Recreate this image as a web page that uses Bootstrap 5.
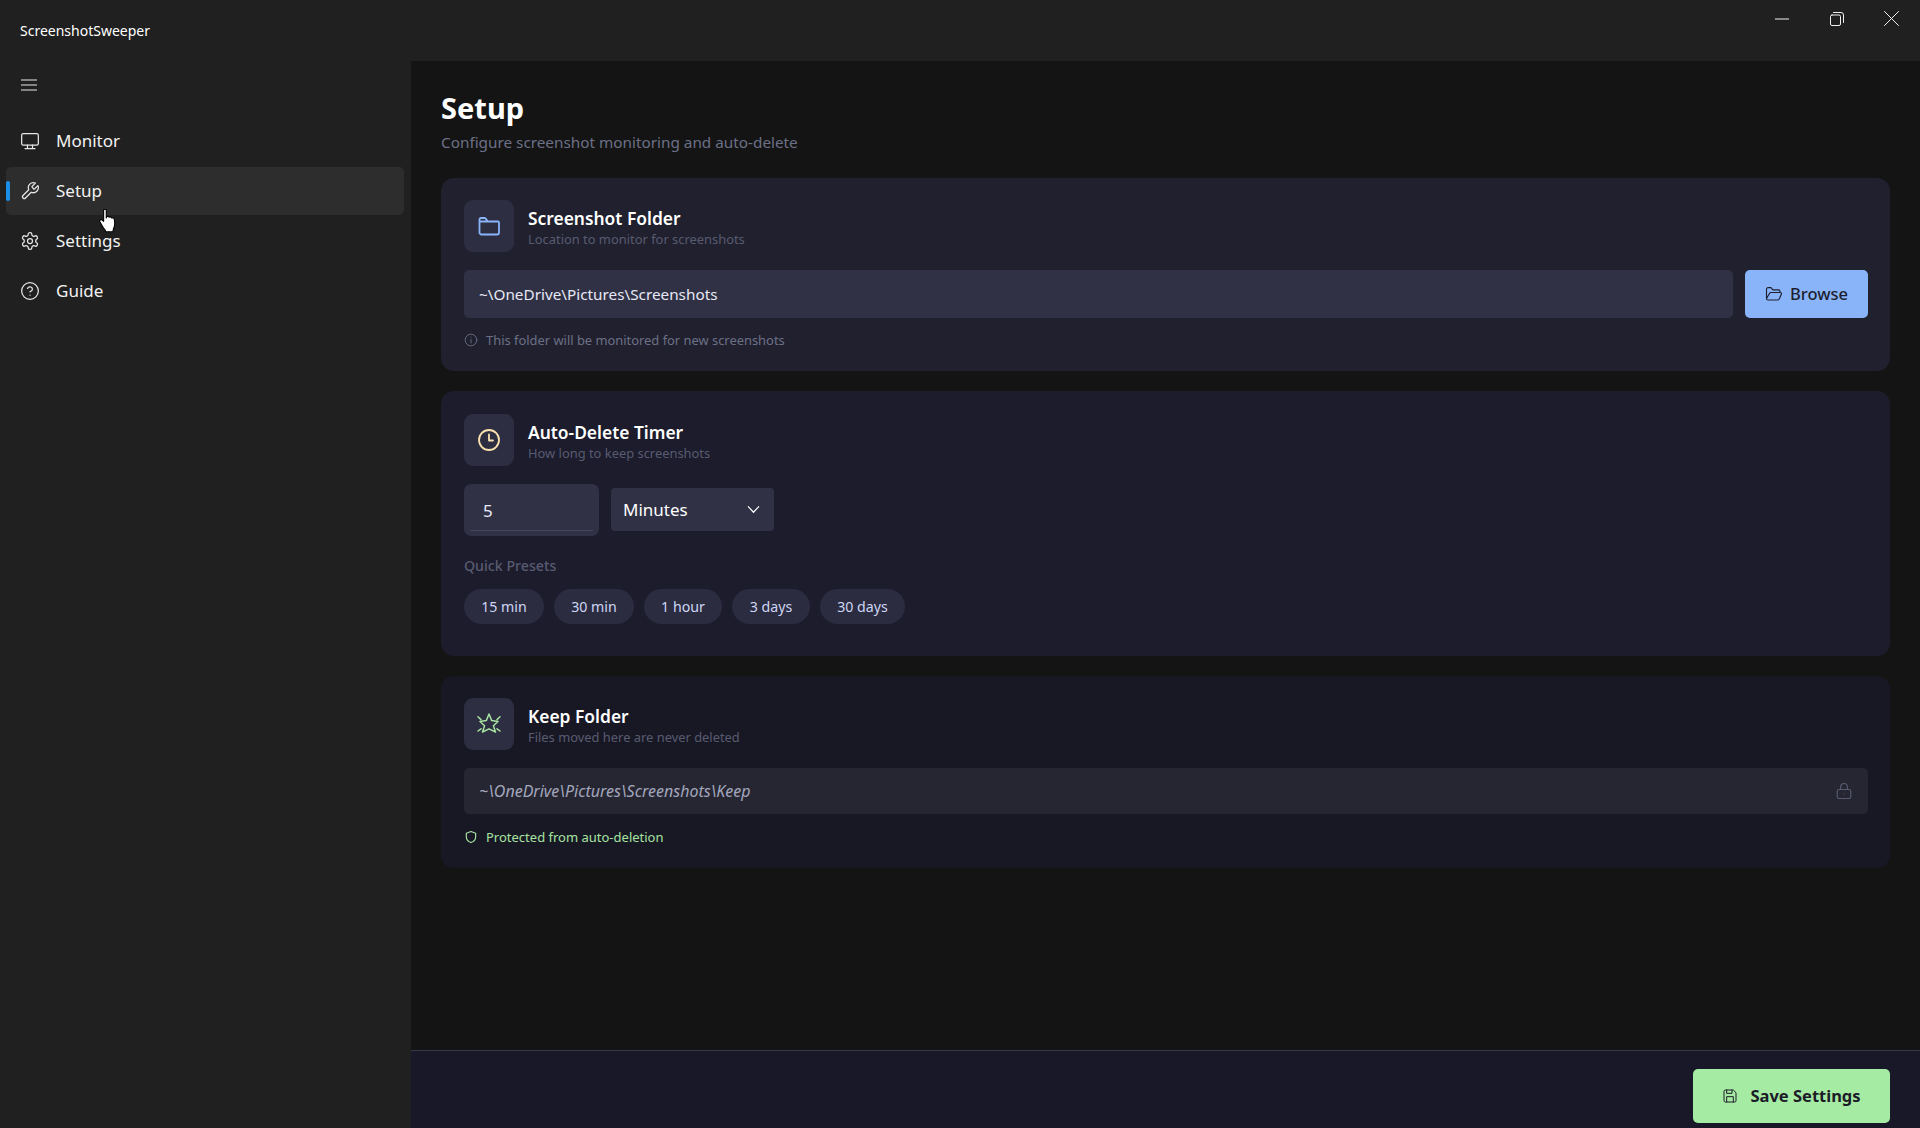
<!DOCTYPE html>
<html lang="en">
<head>
<meta charset="UTF-8">
<meta name="viewport" content="width=device-width, initial-scale=1.0">
<title>ScreenshotSweeper</title>
<link href="https://cdn.jsdelivr.net/npm/bootstrap@5.3.0/dist/css/bootstrap.min.css" rel="stylesheet">
<style>
body { font-family: "Noto Sans", "Open Sans", sans-serif; background: #202020; color: #fff; height: 1128px; overflow: hidden; }
svg { fill: none; stroke: currentColor; stroke-width: 1.5; stroke-linecap: round; stroke-linejoin: round; flex-shrink: 0; }

.titlebar { height: 61px; }
.app-name { font-size: 14px; margin-left: 20px; margin-top: 22px; line-height: 18px; }
.win-btn { width: 55px; height: 37px; color: #f0f0f0; position: relative; left: -1px; }
.win-btn svg { stroke-width: 1; }

.sidebar { width: 411px; padding: 0 7px 0 6px; }
.menu-btn { margin: 10px 0 26px 15px; height: 20px; color: #e8e8e8; }
.nav-row { height: 48px; margin-bottom: 2px; padding-left: 14px; gap: 16px; font-size: 17px; color: #f2f2f2; border-radius: 5px; position: relative; }
.nav-row svg { color: #e6e6e6; }
.nav-row.active { background: #2d2d2d; }
.nav-row.active::before { content: ""; position: absolute; left: 0; top: 14px; width: 4px; height: 20px; border-radius: 2px; background: #1b8fe8; }
.cursor { position: absolute; left: 99px; top: 148px; stroke: #000; stroke-width: 1; fill: #fff; }

.main-pane { background: #141414; }
.main-body { padding: 28px 30px 0; }
.page-title { font-size: 29px; font-weight: 700; line-height: 38px; margin: 0; }
.page-sub { font-size: 15.3px; color: #6c7086; line-height: 20px; margin: 5px 0 26px; }

.panel { border: 0; border-radius: 13px; padding: 22px 22px 0 23px; margin-bottom: 20px; }
.panel-a { background: #20202e; height: 193px; }
.panel-b { background: #1c1c2c; height: 265px; padding-top: 23px; }
.panel-c { background: #181825; height: 192px; }
.icon-box { width: 50px; height: 52px; border-radius: 9px; background: #2e2e42; }
.icon-box svg { stroke-width: 1.8; }
.panel-title { font-size: 17.4px; font-weight: 600; line-height: 22px; margin-top: 7px; }
.panel-sub { font-size: 12.9px; color: #585b70; line-height: 16px; margin-top: 2px; }
.head-row { gap: 14px; margin-bottom: 18px; }

.field { background: #313145; border: 0; border-radius: 5px; color: #e6e9f5; font-size: 15.3px; height: 48px; padding: 0 15px; }
.field:focus { background: #313145; color: #e6e9f5; box-shadow: none; }
.browse { background: #89b4fa; color: #1e1e2e; border: 0; border-radius: 5px; width: 123px; height: 48px; font-size: 16.5px; font-weight: 500; gap: 7px; }
.hint { font-size: 12.9px; color: #6c7086; gap: 8px; margin-top: 13px; line-height: 18px; }

.num-wrap { width: 135px; height: 52px; position: relative; margin-right: 12px; }
.num-wrap .field { height: 52px; padding: 0 19px; font-size: 17px; border-radius: 7px; }
.num-wrap::after { content: ""; position: absolute; left: 6px; right: 6px; bottom: 5px; height: 1px; background: #45455c; }
.unit { width: 163px; height: 43px; background-color: #313145; border: 0; border-radius: 4px; color: #fff; font-size: 17px; padding: 0 12px; background-position: right 13px center; background-size: 15px 11px;
  --bs-form-select-bg-img: url("data:image/svg+xml,%3csvg xmlns='http://www.w3.org/2000/svg' viewBox='0 0 16 12'%3e%3cpath fill='none' stroke='%23ffffff' stroke-width='1.3' d='M2 2.5l6 6.5 6-6.5'/%3e%3c/svg%3e"); }
.preset-label { font-size: 14.2px; font-weight: 500; color: #585b70; line-height: 18px; margin: 21px 0 14px; }
.preset { background: #2c2c40; color: #cdd6f4; border: 0; border-radius: 18px; height: 35px; padding: 0; font-size: 14.2px; }
.keep-field { background: #262632; color: #a3a7bd; font-style: italic; font-size: 16px; height: 46px; border-radius: 5px; padding: 0 15px; }
.lock { color: #585b70; }
.hint.safe { color: #a6e3a1; font-size: 13px; margin-top: 14px; }

.footer-bar { height: 78px; background: #181829; border-top: 1px solid #37374a; padding: 18px 30px 0 0; }
.save { background: #a6eba3; color: #1c1c28; border: 0; border-radius: 5px; width: 197px; height: 54px; font-size: 16.5px; font-weight: 700; gap: 12px; }
</style>
</head>
<body>
<div class="d-flex justify-content-between titlebar">
  <div class="app-name">ScreenshotSweeper</div>
  <div class="d-flex">
    <div class="win-btn d-flex align-items-center justify-content-center"><svg width="14" height="14" viewBox="0 0 14 14"><path d="M0 7h14"/></svg></div>
    <div class="win-btn d-flex align-items-center justify-content-center"><svg width="14" height="14" viewBox="0 0 14 14"><rect x=".5" y="3" width="10" height="10.5" rx="1.5"/><path d="M3.5 .5h7.5a2.5 2.5 0 0 1 2.5 2.5v7.5"/></svg></div>
    <div class="win-btn d-flex align-items-center justify-content-center"><svg width="15" height="15" viewBox="0 0 15 15"><path d="M.5 .5l14 14M14.5 .5l-14 14"/></svg></div>
  </div>
</div>

<div class="d-flex" style="height: 1067px">
  <div class="sidebar position-relative">
    <div class="menu-btn"><svg width="16" height="12" viewBox="0 0 16 12" style="stroke-width:1"><path d="M0 1h16M0 6h16M0 11h16"/></svg></div>
    <div class="nav-row d-flex align-items-center">
      <svg width="20" height="20" viewBox="0 0 24 24"><rect x="2" y="3" width="20" height="14" rx="2"/><path d="M9 17v3.5M15 17v3.5M6 21h12"/></svg>Monitor
    </div>
    <div class="nav-row d-flex align-items-center active">
      <svg width="20" height="20" viewBox="0 0 24 24"><path d="M14.7 6.3a1 1 0 0 0 0 1.4l1.6 1.6a1 1 0 0 0 1.4 0l3.77-3.77a6 6 0 0 1-7.94 7.94l-6.91 6.91a2.12 2.12 0 0 1-3-3l6.91-6.91a6 6 0 0 1 7.94-7.94l-3.76 3.76z"/></svg>Setup
    </div>
    <div class="nav-row d-flex align-items-center">
      <svg width="20" height="20" viewBox="0 0 24 24"><path d="M12.22 2h-.44a2 2 0 0 0-2 2v.18a2 2 0 0 1-1 1.73l-.43.25a2 2 0 0 1-2 0l-.15-.08a2 2 0 0 0-2.73.73l-.22.38a2 2 0 0 0 .73 2.73l.15.1a2 2 0 0 1 1 1.72v.51a2 2 0 0 1-1 1.74l-.15.09a2 2 0 0 0-.73 2.73l.22.38a2 2 0 0 0 2.73.73l.15-.08a2 2 0 0 1 2 0l.43.25a2 2 0 0 1 1 1.73V20a2 2 0 0 0 2 2h.44a2 2 0 0 0 2-2v-.18a2 2 0 0 1 1-1.73l.43-.25a2 2 0 0 1 2 0l.15.08a2 2 0 0 0 2.73-.73l.22-.39a2 2 0 0 0-.73-2.73l-.15-.08a2 2 0 0 1-1-1.74v-.5a2 2 0 0 1 1-1.74l.15-.09a2 2 0 0 0 .73-2.73l-.22-.38a2 2 0 0 0-2.73-.73l-.15.08a2 2 0 0 1-2 0l-.43-.25a2 2 0 0 1-1-1.73V4a2 2 0 0 0-2-2z"/><circle cx="12" cy="12" r="3"/></svg>Settings
    </div>
    <div class="nav-row d-flex align-items-center">
      <svg width="20" height="20" viewBox="0 0 24 24"><circle cx="12" cy="12" r="10"/><path d="M9.09 9a3 3 0 0 1 5.83 1c0 2-3 3-3 3M12 17h.01"/></svg>Guide
    </div>
    <svg class="cursor" width="18" height="24" viewBox="1 1 15 22"><path d="M4.5 2.2c0-1.5 2.4-1.5 2.4 0v7l.5-1.2c.9-.5 1.9-.2 2.2.6.9-.5 1.9-.2 2.2.7.9-.4 2-.1 2.4.9.7 2.6.6 5.8-.5 8.5-.4 1-.6 2-.6 3.2H6.5c-.3-1.4-1-2.3-2-3.3L1.2 13c-1-1.3.3-2.8 1.7-2l1.6 1.3z"/></svg>
  </div>

  <div class="main-pane flex-grow-1 d-flex flex-column">
    <div class="main-body flex-grow-1">
      <h1 class="page-title">Setup</h1>
      <p class="page-sub">Configure screenshot monitoring and auto-delete</p>

      <div class="card panel panel-a text-white">
        <div class="d-flex head-row">
          <div class="icon-box d-flex align-items-center justify-content-center" style="color:#89b4fa">
            <svg width="24" height="24" viewBox="0 0 24 24"><path d="M2.5 8V5.5A1.5 1.5 0 0 1 4 4h3.5a1.5 1.5 0 0 1 1.2.6L11 7.5h10a1 1 0 0 1 1 1v10a2 2 0 0 1-2 2H4.5a2 2 0 0 1-2-2zM2.5 7.5H11"/></svg>
          </div>
          <div><div class="panel-title">Screenshot Folder</div><div class="panel-sub">Location to monitor for screenshots</div></div>
        </div>
        <div class="d-flex gap-2">
          <input class="form-control field flex-grow-1 me-1" value="~\OneDrive\Pictures\Screenshots">
          <button class="btn browse d-flex align-items-center justify-content-center flex-shrink-0">
            <svg width="18" height="18" viewBox="0 0 24 24"><path d="M2 18V5.5A2 2 0 0 1 4 3.5h4l2.5 3H18a2 2 0 0 1 2 2v1.5M2 18a2 2 0 0 0 2 2h13a2 2 0 0 0 2-1.4l3-7a1.5 1.5 0 0 0-1.5-1.6H8a2 2 0 0 0-2 1.4z"/></svg>Browse
          </button>
        </div>
        <div class="hint d-flex align-items-center">
          <svg width="14" height="14" viewBox="0 0 24 24"><circle cx="12" cy="12" r="10"/><path d="M12 11v6M12 7h.01"/></svg>This folder will be monitored for new screenshots
        </div>
      </div>

      <div class="card panel panel-b text-white">
        <div class="d-flex head-row">
          <div class="icon-box d-flex align-items-center justify-content-center" style="color:#f9e2af">
            <svg width="24" height="24" viewBox="0 0 24 24"><circle cx="12" cy="12" r="10"/><path d="M12 6.5V12.5h4"/></svg>
          </div>
          <div><div class="panel-title">Auto-Delete Timer</div><div class="panel-sub">How long to keep screenshots</div></div>
        </div>
        <div class="d-flex align-items-start">
          <div class="num-wrap"><input class="form-control field" value="5"></div>
          <select class="form-select unit mt-1"><option>Minutes</option></select>
        </div>
        <div class="preset-label">Quick Presets</div>
        <div class="d-flex" style="gap:10px">
          <button class="btn preset" style="width:80px">15 min</button>
          <button class="btn preset" style="width:80px">30 min</button>
          <button class="btn preset" style="width:78px">1 hour</button>
          <button class="btn preset" style="width:78px">3 days</button>
          <button class="btn preset" style="width:85px">30 days</button>
        </div>
      </div>

      <div class="card panel panel-c text-white">
        <div class="d-flex head-row">
          <div class="icon-box d-flex align-items-center justify-content-center" style="color:#a6e3a1">
            <svg width="24" height="24" viewBox="0 0 24 24" style="stroke-width:1.5"><path d="M12 2l2.6 6.4 6.4 1.1-4.6 4.2 2.1 6.3-6.5-3.2-6.5 3.2 2.1-6.3L3 9.5l6.4-1.1zM1 4.8l3 2.8M23 4.8l-3 2.8M1 19l3-2.2M23 19l-3-2.2"/></svg>
          </div>
          <div><div class="panel-title">Keep Folder</div><div class="panel-sub">Files moved here are never deleted</div></div>
        </div>
        <div class="keep-field d-flex align-items-center justify-content-between">
          <span>~\OneDrive\Pictures\Screenshots\Keep</span>
          <svg class="lock" width="18" height="18" viewBox="0 0 24 24"><rect x="3" y="10" width="18" height="12" rx="2.5"/><path d="M7.5 10V6.5a4.5 4.5 0 0 1 9 0V10M12 16h.01"/></svg>
        </div>
        <div class="hint safe d-flex align-items-center">
          <svg width="14" height="14" viewBox="0 0 24 24" style="stroke-width:2"><path d="M12 2.5l8 3v6c0 5-3.4 8.4-8 10-4.6-1.6-8-5-8-10v-6z"/></svg>Protected from auto-deletion
        </div>
      </div>
    </div>

    <div class="footer-bar d-flex justify-content-end">
      <button class="btn save d-flex align-items-center justify-content-center">
        <svg width="16" height="16" viewBox="0 0 24 24"><path d="M3 5a2 2 0 0 1 2-2h12l4 4v12a2 2 0 0 1-2 2H5a2 2 0 0 1-2-2z"/><path d="M7 21v-8h10v8M7 3v5h8V3"/></svg>Save Settings
      </button>
    </div>
  </div>
</div>
<script src="https://cdn.jsdelivr.net/npm/bootstrap@5.3.0/dist/js/bootstrap.bundle.min.js"></script>
</body>
</html>
